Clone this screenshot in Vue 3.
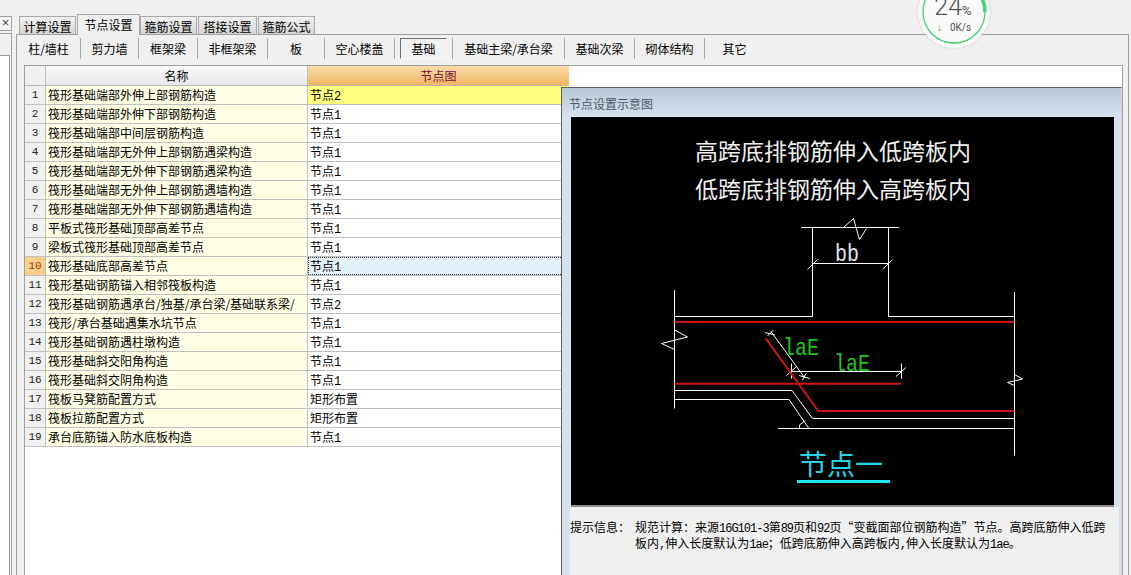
<script setup>
const toolItems = [
  { label: '柱/墙柱', cls: 'w64' },
  { label: '剪力墙', cls: 'w58' },
  { label: '框架梁', cls: 'w59' },
  { label: '非框架梁', cls: 'w70' },
  { label: '板', cls: 'w57' },
  { label: '空心楼盖', cls: 'w70' },
  { label: '基础', cls: 'w58', active: true },
  { label: '基础主梁/承台梁', cls: 'w112' },
  { label: '基础次梁', cls: 'w70' },
  { label: '砌体结构', cls: 'w70' },
  { label: '其它', cls: 'w59 last' }
]
const tabs = [
  { label: '计算设置', cls: 't1' },
  { label: '节点设置', cls: 't2', active: true },
  { label: '箍筋设置', cls: 't3' },
  { label: '搭接设置', cls: 't4' },
  { label: '箍筋公式', cls: 't5' }
]
const rows = [
  ['筏形基础端部外伸上部钢筋构造', '节点', '2'],
  ['筏形基础端部外伸下部钢筋构造', '节点', '1'],
  ['筏形基础端部中间层钢筋构造', '节点', '1'],
  ['筏形基础端部无外伸上部钢筋遇梁构造', '节点', '1'],
  ['筏形基础端部无外伸下部钢筋遇梁构造', '节点', '1'],
  ['筏形基础端部无外伸上部钢筋遇墙构造', '节点', '1'],
  ['筏形基础端部无外伸下部钢筋遇墙构造', '节点', '1'],
  ['平板式筏形基础顶部高差节点', '节点', '1'],
  ['梁板式筏形基础顶部高差节点', '节点', '1'],
  ['筏形基础底部高差节点', '节点', '1'],
  ['筏形基础钢筋锚入相邻筏板构造', '节点', '1'],
  ['筏形基础钢筋遇承台/独基/承台梁/基础联系梁/', '节点', '2'],
  ['筏形/承台基础遇集水坑节点', '节点', '1'],
  ['筏形基础钢筋遇柱墩构造', '节点', '1'],
  ['筏形基础斜交阳角构造', '节点', '1'],
  ['筏形基础斜交阴角构造', '节点', '1'],
  ['筏板马凳筋配置方式', '矩形布置', ''],
  ['筏板拉筋配置方式', '矩形布置', ''],
  ['承台底筋锚入防水底板构造', '节点', '1']
]
</script>

<template>
  <div class="app">
    <aside class="side">
      <div class="close">×</div>
      <div class="side-panel"><div class="side-white"></div></div>
    </aside>

    <main class="main">
      <div class="tabs">
        <div v-for="t in tabs" :key="t.label" class="tab" :class="[t.cls, { on: t.active }]">{{ t.label }}</div>
      </div>
      <section class="panel">
        <div class="toolbar">
          <div v-for="b in toolItems" :key="b.label" class="tool" :class="b.cls">
            <span :class="{ pressed: b.active }">{{ b.label }}</span>
          </div>
        </div>
        <div class="grid">
          <div class="row head">
            <div class="num"></div>
            <div class="name">名称</div>
            <div class="node">节点图</div>
          </div>
          <div v-for="(r, i) in rows" :key="i" class="row" :class="{ first: i === 0, cur: i === 9 }">
            <div class="num">{{ i + 1 }}</div>
            <div class="name">{{ r[0] }}</div>
            <div class="node">{{ r[1] }}<span class="mono">{{ r[2] }}</span></div>
          </div>

          <div class="popup">
            <div class="popup-title">节点设置示意图</div>
            <div class="popup-body">
              <svg class="cad" viewBox="571 117 543 388" width="543" height="388">
                <text class="cad-title" x="833" y="160">高跨底排钢筋伸入低跨板内</text>
                <text class="cad-title" x="833" y="198">低跨底排钢筋伸入高跨板内</text>
                <g class="white">
                  <path d="M801 227.5H899M843.5 227.5L853.5 218.5L859.5 239.5L866.5 228.5" />
                  <path d="M812.5 227.5V316.5M888.5 227.5V316.5" />
                  <path d="M812.5 263.5H888.5M807.5 269.5L817.5 259.5M882.5 269.5L892.5 259.5" />
                  <path d="M674.5 290V408.5M1014.5 292V455.5" />
                  <path d="M674.5 316.5H812.5M888.5 316.5H1014.5" />
                  <path d="M674.5 390.5H792L812.5 418.5H1014.5" />
                  <path d="M674.5 399.5H789L809 428.5" />
                  <path d="M778 428.5H1014.5M799.5 428.5V425L805.5 420.5" />
                  <path d="M674.5 330L687.5 337L661.5 343.5L674.5 349.5" />
                  <path d="M1014.5 374.5L1022.5 379L1007.5 382.5L1014.5 385.5" />
                  <path d="M771 331.5L804.5 377.5M765 332.5L775 335M767.5 336L773.5 330M799 375.5L810 378.5M802.5 380L806 373.5" />
                  <path d="M791.5 371.5H901.5M791.5 363.5V378.5M901.5 363.5V378.5M786.5 375.5L796.5 366.5M896 376.5L906 367.5" />
                </g>
                <g class="red">
                  <path d="M674.5 322H1014.5M674.5 383.7H901" />
                  <path d="M765.7 338.3L818.3 411H1014.5" />
                </g>
                <text class="latin bb" x="835" y="260.5" textLength="24" lengthAdjust="spacingAndGlyphs">bb</text>
                <text class="latin lae" x="783" y="355" textLength="36" lengthAdjust="spacingAndGlyphs">laE</text>
                <text class="latin lae" x="834" y="371" textLength="36" lengthAdjust="spacingAndGlyphs">laE</text>
                <text class="node-name" x="799" y="475">节点一</text>
                <rect class="cyan" x="797" y="480" width="93" height="3" />
              </svg>
            </div>
            <div class="hint">
              <div class="hint-label">提示信息&#xFF1A;</div>
              <div class="hint-text">规范计算&#xFF1A;来源<span class="mono">16G101-3</span>第<span class="mono">89</span>页和<span class="mono">92</span>页“变截面部位钢筋构造”节点。高跨底筋伸入低跨<br />板内<span class="mono">,</span>伸入长度默认为<span class="mono">1ae</span>&#xFF1B;低跨底筋伸入高跨板内<span class="mono">,</span>伸入长度默认为<span class="mono">1ae</span>。</div>
            </div>
          </div>
        </div>
      </section>
    </main>

    <div class="ball">
      <div class="ball-value"><span class="big">24</span><span class="pct">%</span></div>
      <div class="ball-speed"><span class="arrow">↓</span><span>0K/s</span></div>
      <svg class="ball-ring" viewBox="0 0 72 72" width="72" height="72">
        <circle cx="36" cy="36" r="31" fill="none" stroke="#3fcf74" stroke-width="1.3" />
        <path d="M36 5A31 31 0 0 1 67 36" fill="none" stroke="#3fd37a" stroke-width="3.5" />
      </svg>
    </div>
  </div>
</template>

<style>
html, body { margin: 0; padding: 0; overflow: hidden; }
</style>

<style scoped>
.app {
  position: relative;
  display: flex;
  width: 1131px;
  height: 575px;
  overflow: hidden;
  background: #f0f0f0;
  color: #000;
  font: 12px "Noto Sans CJK SC", "Liberation Sans", sans-serif;
}
.side {
  flex: 0 0 12px;
  display: flex;
  flex-direction: column;
  padding-top: 16px;
}
.close {
  height: 13px;
  width: 11px;
  border: 1px solid #a0a0a0;
  border-left: 0;
  background: #f4f4f4;
  font: 13px/12px "Liberation Sans", sans-serif;
  text-align: center;
  color: #444;
}
.side-panel {
  flex: 1;
  margin-top: 2px;
  width: 11px;
  border-top: 1px solid #a0a0a0;
  border-right: 1px solid #a0a0a0;
  padding-top: 21px;
  display: flex;
}
.side-white {
  flex: 1;
  margin-right: 1px;
  background: #fff;
  border-top: 1px solid #a0a0a0;
  border-right: 1px solid #a0a0a0;
}
.main {
  flex: 0 0 1113px;
  margin-left: 4px;
  display: flex;
  flex-direction: column;
  padding-top: 14px;
}
.tabs {
  display: flex;
  align-items: flex-end;
  height: 20px;
  padding-left: 3px;
}
.tab {
  height: 17px;
  border: 1px solid #a8a8a8;
  border-bottom: 0;
  margin-right: 1px;
  background: linear-gradient(#f2f2f2, #d4d4d4);
  text-align: center;
  line-height: 19px;
  color: #000;
}
.tab.on {
  position: relative;
  height: 20px;
  margin-bottom: -1px;
  margin-right: 0;
  background: #f0f0f0;
  line-height: 19px;
  z-index: 1;
}
.t1 { width: 55px; }
.t2 { width: 61px; }
.t3 { width: 55px; }
.t4 { width: 57px; }
.t5 { width: 55px; }
.panel {
  flex: 1;
  min-height: 0;
  display: flex;
  flex-direction: column;
  border: 1px solid #a0a0a0;
  border-bottom: 0;
}
.toolbar {
  flex: 0 0 30px;
  box-sizing: border-box;
  display: flex;
  padding-top: 3px;
}
.tool {
  box-sizing: border-box;
  height: 21px;
  border-right: 1px solid #a8a8a8;
  display: flex;
  align-items: center;
  justify-content: center;
  color: #000;
}
.tool.last { border-right: 0; }
.w64 { width: 64px; }
.w58 { width: 58px; }
.w59 { width: 59px; }
.w70 { width: 70px; }
.w57 { width: 57px; }
.w112 { width: 112px; }
.pressed {
  box-sizing: border-box;
  width: 47px;
  height: 21px;
  line-height: 20px;
  text-align: center;
  border: 1px solid #f8f8f8;
  border-top-color: #707070;
  border-left-color: #707070;
  background: repeating-conic-gradient(#f8f8f8 0 25%, #ececec 0 50%) 0 0 / 2px 2px;
}
.grid {
  position: relative;
  flex: 1;
  min-height: 0;
  margin: 0 5px 0 7px;
  background: #fff;
  border: 1px solid #a0a0a0;
  border-bottom: 0;
}
.row {
  display: flex;
  width: 544px;
  height: 19px;
  box-sizing: border-box;
  border-bottom: 1px solid #c0c0c0;
  line-height: 18px;
}
.row.head {
  height: 20px;
  line-height: 19px;
  border-bottom: 1px solid #b8b8b8;
}
.num {
  flex: 0 0 21px;
  box-sizing: border-box;
  border-right: 1px solid #c0c0c0;
  background: #f0f0f0;
  text-align: center;
  font: 11px/18px "Liberation Mono", monospace;
  color: #222;
}
.name {
  flex: 0 0 262px;
  box-sizing: border-box;
  padding-left: 2px;
  border-right: 1px solid #c0c0c0;
  background: #ffffe6;
  white-space: nowrap;
  overflow: hidden;
  color: #000;
}
.node {
  flex: 0 0 261px;
  box-sizing: border-box;
  padding-left: 2px;
  color: #000;
}
.head .num { line-height: 19px; }
.head .name {
  background: linear-gradient(#fafafa, #e8e8e8);
  text-align: center;
  padding-left: 0;
}
.head .node {
  background: linear-gradient(#f9dcaa, #f0b662);
  text-align: center;
  padding-left: 0;
  color: #7a0a3c;
}
.first .node { background: #ffff80; }
.cur .num { background: #fbcf8a; color: #a04000; }
.cur .node {
  background: #e4f0fb;
  outline: 1px dotted #333;
  outline-offset: -1px;
}
.popup {
  position: absolute;
  left: 536px;
  top: 21px;
  right: 0;
  bottom: 0;
  display: flex;
  flex-direction: column;
  box-sizing: border-box;
  border: 1px solid #606060;
  border-right-color: #d0d8e4;
  border-bottom: 0;
  padding: 0 5px 0 9px;
  background: linear-gradient(#b8c7d6 0, #d6e2ef 29px);
}
.popup-title {
  flex: 0 0 29px;
  box-sizing: border-box;
  margin-left: -2px;
  padding-top: 8px;
  line-height: 16px;
  color: #4d5866;
}
.popup-body {
  flex: 0 0 388px;
  width: 543px;
  background: #000;
  border-bottom: 2px solid #8c8c8c;
}
.cad { display: block; }
.white path { fill: none; stroke: #fff; stroke-width: 1; }
.red path { fill: none; stroke: #cc1414; stroke-width: 2; }
.cad-title {
  fill: #f0f0f0;
  font-size: 23px;
  text-anchor: middle;
}
.latin { font-family: "Liberation Mono", monospace; font-size: 24px; }
.bb { fill: #e4e4f0; }
.lae { fill: #18c818; }
.node-name { fill: #22d4e4; font-size: 28px; }
.cyan { fill: #1ee6f0; }
.hint {
  flex: 1;
  display: flex;
  margin: 0 -3px 0 -1px;
  padding: 13px 0 0 0;
  background: #f0f0f0;
  line-height: 13px;
  color: #000;
}
.hint-label { flex: 0 0 65px; }
.hint-text { white-space: nowrap; }
.mono { font: 12px "Liberation Mono", monospace; letter-spacing: -1px; }
.ball {
  position: absolute;
  left: 918px;
  top: -24px;
  width: 72px;
  height: 72px;
  border-radius: 50%;
  background: #fafafa;
  box-shadow: 0 0 3px rgba(0, 0, 0, 0.15);
  z-index: 3;
  font-family: "Roboto", sans-serif;
  color: #555;
  text-align: center;
}
.ball-ring { position: absolute; left: 0; top: 0; }
.ball-value { padding-top: 16px; height: 28px; line-height: 29px; margin-right: 2px; }
.big { font-size: 25px; font-weight: 300; }
.pct { font-size: 13px; }
.ball-speed {
  display: flex;
  justify-content: center;
  gap: 8px;
  font-size: 10px;
  line-height: 12px;
  margin-top: 2px;
}
.arrow { color: #1fa34a; font-weight: 700; }
</style>
